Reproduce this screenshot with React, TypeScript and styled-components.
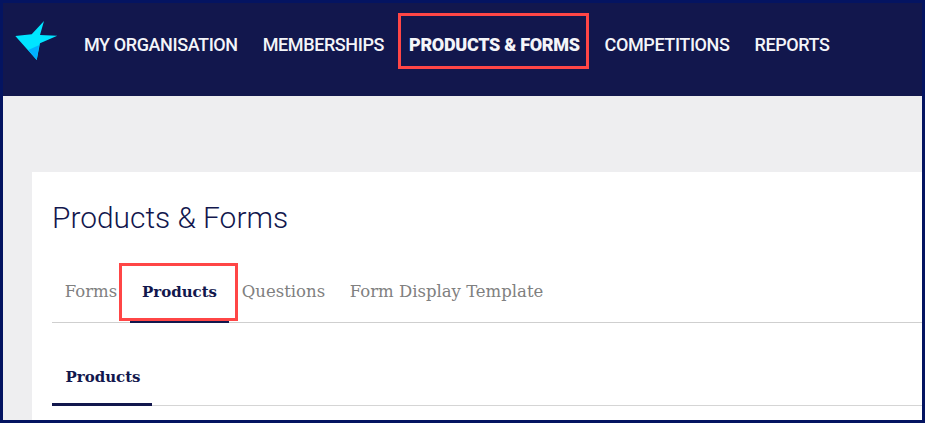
import styled, { createGlobalStyle } from "styled-components";

const GlobalStyle = createGlobalStyle`
  html, body {
    margin: 0;
    padding: 0;
    background: #ffffff;
  }
`;

const Frame = styled.div`
  position: relative;
  box-sizing: border-box;
  width: 925px;
  height: 423px;
  border: 3px solid #041461;
  overflow: hidden;
  background: #eeeef0;
  font-family: Roboto, sans-serif;
`;

const Header = styled.header`
  display: flex;
  align-items: flex-start;
  height: 93px;
  padding-left: 12px;
  background: #12174d;
`;

const Logo = styled.svg`
  width: 43px;
  height: 40px;
  margin-top: 18px;
  flex: none;
`;

const Nav = styled.nav`
  display: flex;
  gap: 25px;
  margin: 32px 0 0 26px;
`;

const NavItem = styled.a<{ $active?: boolean }>`
  color: #f4f5f9;
  font-size: 18px;
  line-height: 20px;
  letter-spacing: ${(props) => (props.$active ? "-0.32px" : "-0.4px")};
  font-weight: ${(props) => (props.$active ? 900 : 500)};
  white-space: nowrap;
`;

const Content = styled.main`
  padding: 76px 0 0 29px;
`;

const Card = styled.section`
  height: 248px;
  padding: 0 0 0 20px;
  background: #ffffff;
`;

const Title = styled.h1`
  margin: 0;
  padding-top: 28px;
  color: #12174d;
  font-size: 29.9px;
  line-height: 35px;
  font-weight: 300;
`;

const Tabs = styled.div`
  display: flex;
  height: 62px;
  margin-top: 26px;
  border-bottom: 1px solid #cfcfcf;
  box-sizing: border-box;
`;

const Tab = styled.a<{ $active?: boolean; $width: number }>`
  box-sizing: content-box;
  width: ${(props) => props.$width}px;
  height: 38px;
  flex: none;
  padding-top: 21px;
  color: ${(props) => (props.$active ? "#12174d" : "#808080")};
  font-family: "DejaVu Serif", serif;
  font-size: ${(props) => (props.$active ? 15 : 16.5)}px;
  line-height: 20px;
  font-weight: ${(props) => (props.$active ? 700 : 400)};
  text-align: center;
  white-space: nowrap;
  border-bottom: 3px solid ${(props) => (props.$active ? "#12174d" : "transparent")};
`;

const SubTabs = styled.div`
  display: flex;
  height: 83px;
  box-sizing: border-box;
  border-bottom: 1px solid #d5d5d5;
`;

const SubTab = styled.a`
  width: 98px;
  height: 36px;
  padding: 44px 0 0 2px;
  color: #12174d;
  font-family: "DejaVu Serif", serif;
  font-size: 15px;
  line-height: 20px;
  font-weight: 700;
  text-align: center;
  border-bottom: 3px solid #12174d;
`;

const Callout = styled.div<{ $left: number; $top: number; $width: number; $height: number }>`
  position: absolute;
  left: ${(props) => props.$left}px;
  top: ${(props) => props.$top}px;
  width: ${(props) => props.$width}px;
  height: ${(props) => props.$height}px;
  box-sizing: border-box;
  border: 3px solid #ff4646;
`;

export default function App() {
  return (
    <Frame>
      <GlobalStyle />
      <Header>
        <Logo viewBox="0 0 43 40">
          <path d="M0.3 15 L16.7 13.3 L29 0 L25 14 L42.3 14.7 L25 22.3 L21.7 39 Z" fill="#00e5ff" />
          <path d="M13.3 29 L24.3 24 L21.7 39 Z" fill="#00b0ff" />
        </Logo>
        <Nav>
          <NavItem>MY ORGANISATION</NavItem>
          <NavItem>MEMBERSHIPS</NavItem>
          <NavItem $active>PRODUCTS &amp; FORMS</NavItem>
          <NavItem>COMPETITIONS</NavItem>
          <NavItem>REPORTS</NavItem>
        </Nav>
      </Header>
      <Content>
        <Card>
          <Title>Products &amp; Forms</Title>
          <Tabs>
            <Tab $width={78}>Forms</Tab>
            <Tab $width={99} $active>Products</Tab>
            <Tab $width={109}>Questions</Tab>
            <Tab $width={217}>Form Display Template</Tab>
          </Tabs>
          <SubTabs>
            <SubTab>Products</SubTab>
          </SubTabs>
        </Card>
      </Content>
      <Callout $left={395} $top={10} $width={191} $height={56} />
      <Callout $left={116} $top={260} $width={119} $height={58} />
    </Frame>
  );
}
